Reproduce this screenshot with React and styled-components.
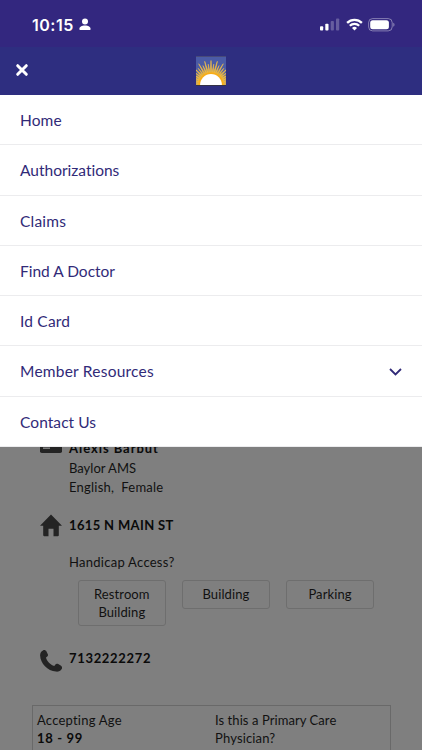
import { useState } from 'react';
import styled, { createGlobalStyle } from 'styled-components';

const GlobalStyle = createGlobalStyle`
  * {
    box-sizing: border-box;
  }

  body {
    margin: 0;
    background: #7f7f7f;
    font-family: Lato, 'Open Sans', sans-serif;
    font-variant-ligatures: none;
  }
`;

//page
const Screen = styled.div`
  display: flex;
  flex-direction: column;
  width: 100%;
  height: 750px;
  overflow: hidden;
`;

const StatusBar = styled.div`
  display: flex;
  align-items: center;
  justify-content: space-between;
  flex: none;
  height: 47px;
  padding: 2px 27px 0 32px;
  background: #33277f;
  color: #fff;
`;

const StatusGroup = styled.div`
  display: flex;
  align-items: center;
  gap: ${(props) => props.$gap}px;
`;

const Time = styled.span`
  font-family: Inter, sans-serif;
  font-size: 16px;
  font-weight: 600;
  line-height: 20px;
  letter-spacing: 0.5px;
`;

const Header = styled.header`
  display: grid;
  grid-template-columns: 1fr 30px 1fr;
  align-items: center;
  flex: none;
  height: 48px;
  padding: 0 15px 1px;
  background: #2e2e80;
`;

const CloseButton = styled.button`
  display: flex;
  justify-self: start;
  padding: 0 0 1px;
  border: 0;
  background: none;
`;

const Body = styled.main`
  position: relative;
  flex: 1;
  min-height: 0;
  background: #7f7f7f;
`;

//menu that drops over the provider details
const Menu = styled.nav`
  position: absolute;
  top: 0;
  left: 0;
  right: 0;
  background: #fff;
`;

const MenuItem = styled.a`
  display: flex;
  align-items: center;
  justify-content: space-between;
  height: 50.28px;
  padding: 1px 20px 0;
  border-bottom: 1px solid #ececee;
  color: #312a78;
  font-size: 15.5px;
  letter-spacing: ${(props) => props.$spacing}px;
`;

//provider details
const Details = styled.div`
  display: flex;
  flex-direction: column;
  padding: 342px 31px 0 32px;
  color: #111;
  font-size: 13px;
`;

const DetailRow = styled.section`
  display: grid;
  grid-template-columns: 37px 1fr;
  height: ${(props) => props.$height}px;
`;

const IconCell = styled.div`
  margin-top: ${(props) => props.$top}px;
  padding-left: 8px;
  line-height: 0;
`;

const Strong = styled.div`
  color: #0a0a0a;
  font-size: 13px;
  font-weight: 700;
  line-height: ${(props) => props.$height || 20}px;
  letter-spacing: ${(props) => props.$spacing}px;
`;

const Line = styled.div`
  line-height: ${(props) => props.$height || 20}px;
  letter-spacing: ${(props) => props.$spacing || 0}px;
  white-space: pre;
`;

const Tags = styled.div`
  display: flex;
  align-items: flex-start;
  gap: 15.6px;
  margin-top: -9px;
  padding-left: 8.6px;
`;

const Tag = styled.div`
  flex: none;
  width: 88.5px;
  min-height: 29px;
  padding: 4px 10px;
  border: 1px solid #6e6e6e;
  border-radius: 3px;
  line-height: 18px;
  letter-spacing: 0.1px;
  text-align: center;
`;

const InfoBox = styled.section`
  display: grid;
  grid-template-columns: 178px 1fr;
  height: 80px;
  padding: 5px 4px;
  border: 1px solid #696969;
`;

const menuItems = [
    { label: 'Home', spacing: 0.1 },
    { label: 'Authorizations', spacing: 0 },
    { label: 'Claims', spacing: 0.2 },
    { label: 'Find A Doctor', spacing: 0 },
    { label: 'Id Card', spacing: 0.2 },
    { label: 'Member Resources', spacing: 0.23, expandable: true },
    { label: 'Contact Us', spacing: 0.07 },
];

//one triangle of the sun, pointing away from the bottom centre
const ray = (angle, length) => {
    const point = (a, r) => {
        const rad = (a * Math.PI) / 180;
        return `${(15 + Math.cos(rad) * r).toFixed(2)},${(29 - Math.sin(rad) * r).toFixed(2)}`;
    };
    return `${point(angle - 4.2, 11.5)} ${point(angle, length)} ${point(angle + 4.2, 11.5)}`;
};

const SunLogo = () => (
    <svg width="30" height="30" viewBox="0 0 30 30">
        <rect width="30" height="30" fill="#4b5ba6" />
        {Array.from({ length: 25 }, (_, i) => (
            <polygon key={i} points={ray(i * 7.5, i % 2 ? 21 : 24.5)} fill="#f5b92f" stroke="#efbd4c" strokeWidth="0.6" />
        ))}
        <path d="M2.200 29a12.800 12.800 0 0 1 25.600 0z" fill="#f7ad19" />
        <path d="M4.100 29a10.900 10.900 0 0 1 21.800 0z" fill="#fff" />
        <path d="M0 29.5h30" stroke="#343247" />
        <path d="M0 .5h30" stroke="#484465" strokeWidth="0.7" />
    </svg>
);

const PersonIcon = () => (
    <svg width="12" height="13" viewBox="0 0 12 13" fill="currentColor">
        <circle cx="6" cy="3.5" r="3" />
        <path d="M.4 11c0-2.200 2.300-3.600 5.600-3.600s5.600 1.400 5.600 3.600c0 .700-.300 1.100-1.100 1.100h-9c-.800 0-1.100-.400-1.100-1.100z" />
    </svg>
);

const SignalIcon = () => (
    <svg width="20" height="13" viewBox="0 0 20 13" fill="currentColor">
        <rect x="0" y="8.300" width="3.200" height="4.200" rx="0.900" />
        <rect x="5.300" y="5.700" width="3.200" height="6.800" rx="0.900" />
        <rect x="10.700" y="3" width="3.200" height="9.500" rx="0.900" opacity="0.25" />
        <rect x="16" y="0.400" width="3.200" height="12.100" rx="0.900" opacity="0.25" />
    </svg>
);

const WifiIcon = () => (
    <svg width="17" height="13" viewBox="0 0 17 13" fill="none" stroke="currentColor">
        <path d="M1.100 4.900a10.500 10.500 0 0 1 14.800 0" strokeWidth="2.300" />
        <path d="M3.800 7.800a6.700 6.700 0 0 1 9.400 0" strokeWidth="2.200" />
        <path d="M8.500 12.400 6 9.900a3.700 3.700 0 0 1 5 0z" fill="currentColor" stroke="none" />
    </svg>
);

const BatteryIcon = () => (
    <svg width="27" height="14" viewBox="0 0 27 14">
        <rect x="0.600" y="0.600" width="23.600" height="12.300" rx="4" fill="none" stroke="#fff" strokeOpacity="0.4" />
        <rect x="2.200" y="2.200" width="18.700" height="9.100" rx="2.500" fill="#fff" />
        <path d="M25.400 4.800c1.400.600 1.400 3.400 0 4z" fill="#fff" opacity="0.5" />
    </svg>
);

const CloseIcon = () => (
    <svg width="14" height="14" viewBox="0 0 14 14">
        <path d="M2.700 2.700l8.600 8.600M11.300 2.700l-8.600 8.600" stroke="#fff" strokeWidth="3" strokeLinecap="round" />
    </svg>
);

const ChevronIcon = () => (
    <svg width="13" height="9" viewBox="0 0 13 9" fill="none">
        <path d="M1 2l5.500 5.500L12 2" stroke="#312a78" strokeWidth="1.800" />
    </svg>
);

const CardIcon = () => (
    <svg width="22" height="17" viewBox="0 0 22 17">
        <rect width="22" height="17" rx="1.800" fill="#242424" />
        <path d="M3 12.200h7" stroke="#7f7f7f" strokeWidth="1.500" />
    </svg>
);

const HomeIcon = () => (
    <svg width="22" height="23" viewBox="0 0 22 23" fill="#242424">
        <path d="M11 .500 22 11.800h-3.200V21c0 .800-.300 1.200-1 1.200h-4.300v-7.400h-5v7.400H4.200c-.700 0-1-.400-1-1.200v-9.200H0z" />
    </svg>
);

const PhoneIcon = () => (
    <svg width="22" height="22" viewBox="0 0 22 22" fill="#242424">
        <path d="M3 .400c1.300-.700 2.800-.100 3.500 1.100l1.200 2.400c.600 1.200.300 2.200-.700 2.900l-1 .700c.800 3.700 4.500 7.500 8.300 8.400l.9-1.200c.8-1 1.900-1.200 3-.6l2.500 1.400c1.400.9 1.700 2.200 1 3.500-1.200 2-3.200 2.800-5.700 2.600C7.500 20.900.500 13.500.100 5.500 0 3 1.200 1.300 3 .400z" />
    </svg>
);

const App = () => {
    const [open, setOpen] = useState(true); //menu is shown until the cross is pressed

    return (
        <Screen>
            <GlobalStyle />
            <StatusBar>
                <StatusGroup $gap={5}>
                    <Time>10:15</Time>
                    <PersonIcon />
                </StatusGroup>
                <StatusGroup $gap={5.5}>
                    <SignalIcon />
                    <WifiIcon />
                    <BatteryIcon />
                </StatusGroup>
            </StatusBar>
            <Header>
                <CloseButton onClick={() => setOpen(!open)}>
                    <CloseIcon />
                </CloseButton>
                <SunLogo />
            </Header>
            <Body>
                <Details>
                    <DetailRow $height={78}>
                        <IconCell $top={-1}>
                            <CardIcon />
                        </IconCell>
                        <div>
                            <Strong $height={22} $spacing={0.95}>Alexis Barbut</Strong>
                            <Line $height={18}>Baylor AMS</Line>
                            <Line $spacing={0.23}>English,  Female</Line>
                        </div>
                    </DetailRow>
                    <DetailRow $height={133}>
                        <IconCell $top={-1}>
                            <HomeIcon />
                        </IconCell>
                        <div>
                            <Strong $spacing={0.35}>1615 N MAIN ST</Strong>
                            <Line $height={54} $spacing={0.27}>Handicap Access?</Line>
                            <Tags>
                                <Tag>Restroom Building</Tag>
                                <Tag>Building</Tag>
                                <Tag>Parking</Tag>
                            </Tags>
                        </div>
                    </DetailRow>
                    <DetailRow $height={57}>
                        <IconCell $top={2}>
                            <PhoneIcon />
                        </IconCell>
                        <Strong $spacing={0.67}>7132222272</Strong>
                    </DetailRow>
                    <InfoBox>
                        <div>
                            <Line $height={18} $spacing={0.22}>Accepting Age</Line>
                            <Strong $height={18} $spacing={0.65}>18 - 99</Strong>
                        </div>
                        <div>
                            <Line $height={18} $spacing={0.07}>Is this a Primary Care</Line>
                            <Line $height={18} $spacing={0.15}>Physician?</Line>
                        </div>
                    </InfoBox>
                </Details>
                {open && (
                    <Menu>
                        {menuItems.map((item) => (
                            <MenuItem key={item.label} $spacing={item.spacing}>
                                {item.label}
                                {item.expandable && <ChevronIcon />}
                            </MenuItem>
                        ))}
                    </Menu>
                )}
            </Body>
        </Screen>
    );
};

export default App;
